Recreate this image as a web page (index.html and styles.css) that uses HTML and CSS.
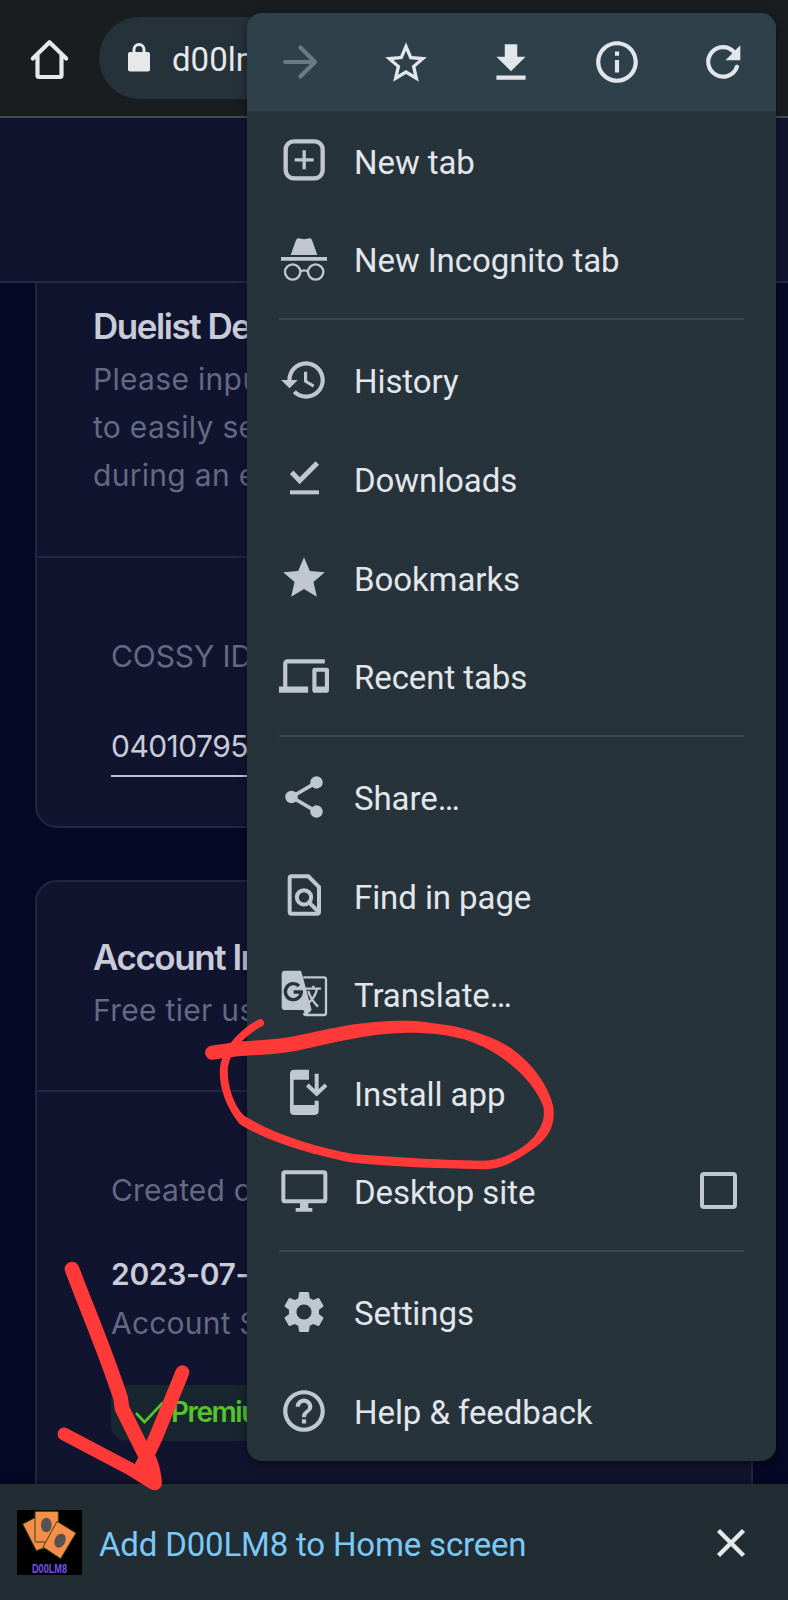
FILE: index.html
```html
<!DOCTYPE html>
<html lang="en">
<head>
<meta charset="utf-8">
<title>D00LM8</title>
<link rel="stylesheet" href="styles.css">
</head>
<body>
<div class="screen">
  <header class="toolbar">
    <svg class="home" viewBox="0 0 50 50"><path d="M12.5 21V41.5Q12.5 43 14 43H35Q36.5 43 36.5 41.5V21M7.8 24.5 24.5 8.2 41.2 24.5" fill="none" stroke="currentColor" stroke-width="4.2" stroke-linecap="round" stroke-linejoin="round"/></svg>
    <div class="address">
      <svg class="lock" viewBox="0 0 24 32"><rect x="1" y="11" width="22" height="19.5" rx="2" fill="currentColor"/><path d="M7 12V8.5a5 5 0 0 1 10 0V12" fill="none" stroke="currentColor" stroke-width="3"/></svg>
      <span>d00lm8</span>
    </div>
  </header>

  <main class="page">
    <div class="page-head"></div>
    <section class="card card-first">
      <div class="card-head">
        <h2>Duelist Details</h2>
        <p>Please input<br>to easily see<br>during an ev</p>
      </div>
      <div class="card-body">
        <label>COSSY ID</label>
        <div class="field">04010795</div>
      </div>
    </section>
    <section class="card card-second">
      <div class="card-head">
        <h2>Account Info</h2>
        <p>Free tier use</p>
      </div>
      <div class="card-body">
        <div class="muted">Created on</div>
        <div class="date">2023-07-0</div>
        <div class="muted status">Account St</div>
        <div class="tag"><svg viewBox="0 0 30 24"><path d="M1 12l8.500 9L28 1.500" fill="none" stroke="currentColor" stroke-width="2.600"/></svg><span>Premium</span></div>
      </div>
    </section>
  </main>

  <footer class="install-bar">
    <svg class="app-logo" viewBox="0 0 195 195">
      <rect width="195" height="195" fill="#000"/>
      <g fill="#f58e4b" stroke="#35430d" stroke-width="3">
        <path d="M17 42L60 20 98 108 58 122z"/>
        <rect x="54" y="4" width="70" height="92" rx="4"/>
        <path d="M120 34L177 69 131 146 78 111z"/>
      </g>
      <ellipse cx="88" cy="45" rx="16" ry="22" fill="#565250"/>
      <ellipse cx="129" cy="92" rx="16" ry="22" transform="rotate(25 129 92)" fill="#565250"/>
      <text x="45" y="188" textLength="105" lengthAdjust="spacingAndGlyphs" class="logo-text">D00LM8</text>
    </svg>
    <span class="install-text">Add D00LM8 to Home screen</span>
    <svg class="close" viewBox="0 0 30 30"><path d="M2.500 2.500l25 25M27.500 2.500l-25 25" stroke="currentColor" stroke-width="4.400"/></svg>
  </footer>

  <nav class="menu">
    <div class="menu-top">
      <svg class="icon dim" viewBox="0 0 24 24"><path d="M4.800 12H19M12.200 5l7 7-7 7" fill="none" stroke="currentColor" stroke-width="2" stroke-linecap="round" stroke-linejoin="round"/></svg>
      <svg class="icon low" viewBox="0 0 24 24"><path fill="currentColor" d="M22 9.240l-7.190-.620L12 2 9.190 8.630 2 9.240l5.460 4.730L5.820 21 12 17.270 18.180 21l-1.630-7.030L22 9.240zM12 15.400l-3.760 2.270 1-4.280-3.320-2.880 4.380-.380L12 6.100l1.710 4.040 4.380.380-3.320 2.880 1 4.280L12 15.400z"/></svg>
      <svg class="icon low" viewBox="0 0 24 24"><path fill="currentColor" d="M19 9h-4V3H9v6H5l7 7 7-7zM5 18v2h14v-2H5z"/></svg>
      <svg class="icon" viewBox="0 0 24 24"><path fill="currentColor" d="M11 7h2v2h-2zm0 4h2v6h-2zm1-9C6.480 2 2 6.480 2 12s4.480 10 10 10 10-4.480 10-10S17.520 2 12 2zm0 18c-4.410 0-8-3.590-8-8s3.590-8 8-8 8 3.590 8 8-3.590 8-8 8z"/></svg>
      <svg class="icon" viewBox="0 0 24 24"><path d="M17.300 7.200A7.100 7.100 0 1 0 18.700 14.300" fill="none" stroke="currentColor" stroke-width="2" stroke-linecap="round"/><path d="M20.300 4v7.100h-7.100z" fill="currentColor"/></svg>
    </div>
    <div class="group">
      <div class="item"><svg class="icon" viewBox="0 0 150 150"><g fill="none" stroke="currentColor"><rect x="20" y="19" width="111" height="111" rx="24" stroke-width="13"/><path d="M47 74.500h57M75.500 46v57" stroke-width="10"/></g></svg><span>New tab</span></div>
      <div class="item"><svg class="icon" viewBox="0 0 150 150"><path fill="currentColor" d="M35 63L51 18Q54 12 60 13 75 18 91 13 97 12 99 18L115 63zM6 69h138v11H6z"/><g fill="none" stroke="currentColor" stroke-width="7"><circle cx="41" cy="114" r="23"/><circle cx="110" cy="114" r="23"/><path d="M64 113Q75.500 105 87 113"/></g></svg><span>New Incognito tab</span></div>
    </div>
    <div class="group">
      <div class="item"><svg class="icon" viewBox="0 0 24 24"><path fill="currentColor" d="M13 3c-4.970 0-9 4.030-9 9H1l3.890 3.890.070.140L9 12H6c0-3.870 3.130-7 7-7s7 3.130 7 7-3.130 7-7 7c-1.930 0-3.680-.790-4.940-2.060l-1.420 1.420C8.270 19.990 10.510 21 13 21c4.970 0 9-4.030 9-9s-4.030-9-9-9zm-1 5v5l4.280 2.540.720-1.210-3.500-2.080V8H12z"/></svg><span>History</span></div>
      <div class="item"><svg class="icon" viewBox="0 0 150 150"><path d="M38 58L62 83 115 30" fill="none" stroke="currentColor" stroke-width="15"/><path d="M33 112h87v12H33z" fill="currentColor"/></svg><span>Downloads</span></div>
      <div class="item"><svg class="icon low" viewBox="0 0 24 24"><path fill="currentColor" d="M12 17.270L18.180 21l-1.640-7.030L22 9.240l-7.190-.610L12 2 9.190 8.630 2 9.240l5.460 4.730L5.820 21z"/></svg><span>Bookmarks</span></div>
      <div class="item"><svg class="icon" viewBox="0 0 24 24"><path fill="currentColor" fill-rule="evenodd" d="M4 6h18V4H4c-1.100 0-2 .9-2 2v11H0v3h14v-3H4V6zm19 2h-6c-.550 0-1 .450-1 1v10c0 .550.450 1 1 1h6c.550 0 1-.450 1-1V9c0-.550-.450-1-1-1zm-1 9h-4v-7h4v7z"/></svg><span>Recent tabs</span></div>
    </div>
    <div class="group">
      <div class="item"><svg class="icon" viewBox="0 0 24 24"><path d="M6 12L18 5M6 12l12 7" stroke="currentColor" stroke-width="1.800"/><g fill="currentColor"><circle cx="6" cy="12" r="3"/><circle cx="18" cy="5" r="3"/><circle cx="18" cy="19" r="3"/></g></svg><span>Share…</span></div>
      <div class="item"><svg class="icon" viewBox="0 0 150 150"><g fill="none" stroke="currentColor" stroke-width="12"><path d="M38 19H88L120 51V126Q120 131 114 131H38Q32 131 32 125V25Q32 19 38 19z"/><circle cx="75" cy="82" r="21.500"/><path d="M90 97L122 129"/></g></svg><span>Find in page</span></div>
      <div class="item"><svg class="icon" viewBox="0 0 150 150"><path d="M73 25H135Q141 25 141 31V132Q141 138 135 138H80Q75 138 74 133" fill="none" stroke="currentColor" stroke-width="7"/><path fill="currentColor" d="M18 5H66L71 22 98 123 80 141 73 123H18Q8 123 8 113V15Q8 5 18 5z"/><path class="cut" d="M60 51A24 24 0 1 0 67 69H44" fill="none" stroke-width="10"/><path d="M80 59H126M103 50V59M88 66Q95 91 117 113M114 60Q108 88 84 105" fill="none" stroke="currentColor" stroke-width="7"/></svg><span>Translate…</span></div>
      <div class="item"><svg class="icon" viewBox="0 0 150 150"><path fill="currentColor" d="M46 8H90V38H44V114H107V101H119V131Q119 144 106 144H46Q33 144 33 131V21Q33 8 46 8z"/><path d="M113 20V78M85 54L113 80 141 54" fill="none" stroke="currentColor" stroke-width="12"/></svg><span>Install app</span></div>
      <div class="item"><svg class="icon" viewBox="0 0 150 150"><rect x="13" y="19" width="126" height="87" rx="5" fill="none" stroke="currentColor" stroke-width="12"/><path fill="currentColor" d="M63 110h25v16h12v11H50V126h13z"/></svg><span>Desktop site</span><i class="checkbox"></i></div>
    </div>
    <div class="group">
      <div class="item"><svg class="icon" viewBox="0 0 24 24"><path fill="currentColor" d="M19.140 12.940c.040-.3.060-.610.060-.940 0-.320-.020-.640-.070-.940l2.030-1.580c.180-.140.230-.410.120-.610l-1.920-3.320c-.120-.220-.370-.290-.590-.220l-2.390.960c-.5-.380-1.030-.7-1.620-.940l-.360-2.540c-.040-.240-.240-.410-.480-.410h-3.840c-.240 0-.430.170-.470.410l-.360 2.540c-.590.240-1.130.570-1.620.940l-2.390-.960c-.220-.080-.470 0-.590.220L2.740 8.870c-.120.210-.080.470.120.610l2.030 1.580c-.050.3-.090.630-.090.940s.020.640.070.940l-2.030 1.580c-.180.140-.230.410-.120.610l1.920 3.320c.120.220.370.290.590.220l2.390-.960c.5.380 1.030.7 1.620.940l.360 2.540c.050.240.240.410.480.410h3.840c.240 0 .440-.170.470-.410l.360-2.540c.590-.240 1.130-.560 1.620-.940l2.390.960c.220.080.470 0 .590-.220l1.920-3.320c.120-.220.070-.470-.120-.610l-2.010-1.580zM12 15.600c-1.980 0-3.600-1.620-3.600-3.600s1.620-3.600 3.600-3.600 3.600 1.620 3.600 3.600-1.620 3.600-3.600 3.600z"/></svg><span>Settings</span></div>
      <div class="item"><svg class="icon" viewBox="0 0 24 24"><path fill="currentColor" d="M11 18h2v-2h-2v2zm1-16C6.480 2 2 6.480 2 12s4.480 10 10 10 10-4.480 10-10S17.520 2 12 2zm0 18c-4.410 0-8-3.590-8-8s3.590-8 8-8 8 3.590 8 8-3.590 8-8 8zm0-14c-2.210 0-4 1.790-4 4h2c0-1.100.9-2 2-2s2 .9 2 2c0 2-3 1.750-3 5h2c0-2.250 3-2.500 3-5 0-2.210-1.790-4-4-4z"/></svg><span>Help &amp; feedback</span></div>
    </div>
  </nav>

  <svg class="marks" viewBox="0 0 788 1600">
    <g transform="translate(200 1000) scale(.33333)"><path fill="#ff3838" d="M33 137C70 133 90 128 130 124 200 119 240 117 290 107 C400 84 480 62 620 62C660 62 690 68 740 75 C800 84 860 106 900 125 C980 165 1045 250 1060 320C1068 390 1035 425 980 460 C930 492 900 508 850 508C700 505 560 500 450 487C330 463 190 420 118 371C75 320 55 250 60 205C65 150 115 90 175 59A11 11 0 0 1 186 79C150 97 95 140 84 200C78 260 110 335 140 352C240 410 350 440 460 462C560 470 700 480 850 482C900 482 960 455 1000 413C1030 375 1035 350 1030 320C1005 250 930 180 850 140C830 132 810 123 790 117C740 105 700 98 620 98C500 101 400 128 290 152C200 168 140 162 40 179A21 21 0 0 1 33 137z"/></g>
    <g transform="translate(0 1200) scale(.33333)" fill="none" stroke="#ff3838" stroke-linecap="round" stroke-linejoin="round"><path d="M216 207C258 320 315 450 362 595L366 625 438 770" stroke-width="44"/><path d="M192 702L390 806 460 850" stroke-width="39"/><path d="M547 517L466 715 440 770 424 800" stroke-width="42"/><path d="M450 780Q464 815 465 850" stroke-width="41"/></g>
  </svg>
</div>
</body>
</html>
```
FILE: styles.css
```css
* { box-sizing: border-box; }
body { margin: 0; background: #050925; }
.screen { position: relative; width: 788px; height: 1600px; overflow: hidden; display: flex; flex-direction: column; font-family: Roboto, "Liberation Sans", sans-serif; }
.toolbar { flex: none; height: 118px; display: flex; align-items: center; background: #191d20; border-bottom: 2px solid #484c50; color: #e6e8ea; }
.home { width: 50px; height: 50px; margin-left: 25px; margin-top: 2px; }
.address { flex: none; width: 500px; height: 82px; margin-left: 24px; padding-left: 28px; display: flex; align-items: center; gap: 21px; background: #253239; border-radius: 41px 0 0 41px; font-size: 33px; }
.lock { width: 24px; height: 32px; margin-top: -2px; }
.address span { padding-top: 2px; }

.page { flex: 1; min-height: 0; overflow: hidden; background: #050925; font-family: Inter, "Liberation Sans", sans-serif; }
.page-head { height: 165px; background: #10142f; border-bottom: 2px solid #242844; }
.card { width: 718px; margin-left: 35px; background: #10142f; border: 2px solid #222642; white-space: nowrap; overflow: hidden; }
.card-first { height: 545px; border-top: 0; border-radius: 0 0 22px 22px; }
.card-second { height: 700px; margin-top: 52px; border-radius: 22px; }
.card-head { height: 275px; padding: 19px 0 0 56px; border-bottom: 2px solid #222642; }
.card-second .card-head { height: 210px; padding-top: 51px; }
h2 { margin: 0; font-size: 35px; line-height: 48px; font-weight: 600; letter-spacing: -1.450px; color: #cacbd8; }
p { margin: 5px 0 0; font-size: 30px; line-height: 48px; letter-spacing: .3px; color: #656981; }
.card-body { padding: 74px 0 0 74px; font-size: 30px; line-height: 48px; }
.card-body label { display: block; color: #656981; letter-spacing: -.1px; }
.field { height: 67px; margin-top: 30px; padding-top: 12px; border-bottom: 2px solid #bfc1ce; color: #cacbd8; letter-spacing: -.550px; }
.muted { color: #656981; letter-spacing: .2px; }
.date { margin-top: 36px; font-weight: 600; letter-spacing: -.3px; color: #cacbd8; }
.status { margin-top: 1px; }
.tag { height: 56px; margin-top: 38px; padding-left: 24px; display: flex; align-items: center; gap: 6px; background: #18262f; border-radius: 16px; color: #55c42b; font-size: 28px; font-weight: 600; letter-spacing: -1.500px; }
.tag svg { width: 30px; height: 24px; }
.tag span { margin-top: -3px; }

.install-bar { flex: none; height: 116px; padding: 0 42px 0 17px; display: flex; align-items: center; background: #222d33; box-shadow: 0 0 8px rgba(0,0,0,.5); z-index: 1; }
.app-logo { width: 65px; height: 65px; }
.logo-text { font: bold 40px "Liberation Sans", sans-serif; fill: #7650f0; }
.install-text { flex: 1; margin-left: 17px; font-size: 33px; letter-spacing: -.180px; color: #7ac9f7; padding-top: 4px; }
.close { width: 30px; height: 30px; margin-top: 2px; color: #e6e8ea; }

.menu { position: absolute; z-index: 2; left: 247px; top: 12.500px; width: 529px; height: 1448px; border-radius: 15px; overflow: hidden; background: #26333b; box-shadow: 0 3px 10px rgba(0,0,0,.45); color: #bfc7cf; }
.menu-top { height: 98.500px; padding-top: 1px; display: grid; grid-template-columns: repeat(5, 1fr); place-items: center; background: #2e404a; color: #e2e6ea; }
.icon { width: 50px; height: 50px; flex: none; display: block; }
.dim { color: #6c7a82; }
.low { margin-top: 2px; }
.group + .group::before { content: ""; display: block; height: 2px; margin: 10.200px 32px; background: #3b474f; }
.item { height: 98.600px; padding: 0 39px 0 32px; display: flex; align-items: center; font-size: 33px; letter-spacing: -.080px; }
.item span { flex: 1; margin-left: 25px; padding-top: 4px; color: #e2e6ea; }
.checkbox { width: 37px; height: 37px; border: 4px solid #bfc7cf; border-radius: 4px; }
.cut { stroke: #26333b; }
.marks { position: absolute; z-index: 3; left: 0; top: 0; width: 788px; height: 1600px; pointer-events: none; }
```
